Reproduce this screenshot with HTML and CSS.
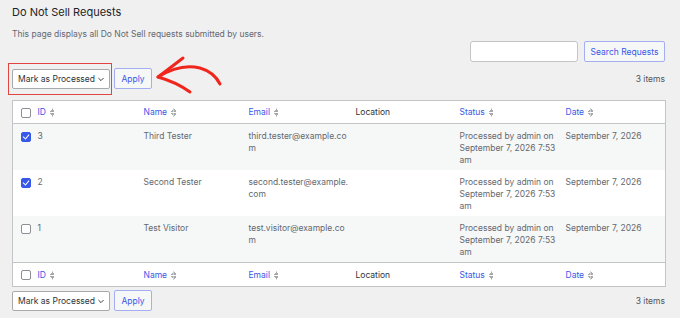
FILE: index.html
```html
<!DOCTYPE html>
<html lang="en">
<head>
    <meta charset="UTF-8">
    <title>Do Not Sell Requests</title>
    <link rel="stylesheet" href="styles.css">
</head>
<body>

<h1 class="page-title">Do Not Sell Requests</h1>
<p class="page-desc">This page displays all Do Not Sell requests submitted by users.</p>

<form class="search-box">
    <input type="text" class="search-input">
    <button type="button" class="btn">Search Requests</button>
</form>

<div class="tablenav top">
    <div class="bulkactions">
        <span class="highlight">
            <span class="select">Mark as Processed <svg class="chev" width="7" height="5" viewBox="0 0 7 5"><path d="M0.5 0.8 L3.5 3.8 L6.5 0.8" fill="none" stroke="#2c3338" stroke-width="1.1"/></svg></span>
        </span>
        <button type="button" class="btn">Apply</button>
        <!-- annotation arrow -->
        <svg class="arrow" width="80" height="46" viewBox="0 0 80 46">
            <path d="M6,25 Q28,11 48,16 Q62,20 68,32" fill="none" stroke="#f0261c" stroke-width="3" stroke-linecap="round"/>
            <path d="M31,6 Q18,16 6,25 Q24,30 38,40" fill="none" stroke="#f0261c" stroke-width="3" stroke-linecap="round" stroke-linejoin="round"/>
        </svg>
    </div>
    <span class="count">3 items</span>
</div>

<table class="list-table">
    <colgroup>
        <col style="width:19px"><col style="width:106px"><col style="width:105px"><col style="width:107px">
        <col style="width:104px"><col style="width:106px"><col style="width:106px">
    </colgroup>
    <thead>
        <tr>
            <th class="cb"><span class="check"></span></th>
            <th><a>ID</a><i class="sort"></i></th>
            <th><a>Name</a><i class="sort"></i></th>
            <th><a>Email</a><i class="sort"></i></th>
            <th>Location</th>
            <th><a>Status</a><i class="sort"></i></th>
            <th><a>Date</a><i class="sort"></i></th>
        </tr>
    </thead>
    <tbody>
        <tr class="alt">
            <td class="cb"><span class="check on"></span></td>
            <td>3</td>
            <td>Third Tester</td>
            <td class="email">third.tester@example.com</td>
            <td></td>
            <td class="status">Processed by admin on September 7, 2026 7:53 am</td>
            <td>September 7, 2026</td>
        </tr>
        <tr>
            <td class="cb"><span class="check on"></span></td>
            <td>2</td>
            <td>Second Tester</td>
            <td class="email">second.tester@example.com</td>
            <td></td>
            <td class="status">Processed by admin on September 7, 2026 7:53 am</td>
            <td>September 7, 2026</td>
        </tr>
        <tr class="alt">
            <td class="cb"><span class="check"></span></td>
            <td>1</td>
            <td>Test Visitor</td>
            <td class="email">test.visitor@example.com</td>
            <td></td>
            <td class="status">Processed by admin on September 7, 2026 7:53 am</td>
            <td>September 7, 2026</td>
        </tr>
    </tbody>
    <tfoot>
        <tr>
            <th class="cb"><span class="check"></span></th>
            <th><a>ID</a><i class="sort"></i></th>
            <th><a>Name</a><i class="sort"></i></th>
            <th><a>Email</a><i class="sort"></i></th>
            <th>Location</th>
            <th><a>Status</a><i class="sort"></i></th>
            <th><a>Date</a><i class="sort"></i></th>
        </tr>
    </tfoot>
</table>

<div class="tablenav bottom">
    <div class="bulkactions">
        <span class="select">Mark as Processed <svg class="chev" width="7" height="5" viewBox="0 0 7 5"><path d="M0.5 0.8 L3.5 3.8 L6.5 0.8" fill="none" stroke="#2c3338" stroke-width="1.1"/></svg></span>
        <button type="button" class="btn">Apply</button>
    </div>
    <span class="count">3 items</span>
</div>

</body>
</html>
```

FILE: styles.css
```css
body {
    margin: 0;
    padding: 4px 15px 0 12px;
    background-color: #f0f0f1;
    font-family: "Inter", "Liberation Sans", sans-serif;
    font-size: 8.5px;
    color: #50575e;
}
.page-title {
    margin: 0;
    font-size: 11px;
    font-weight: 400;
    line-height: 16px;
    color: #1d2327;
}
.page-desc {
    margin: 8px 0 0;
    line-height: 12px;
    color: #646970;
}
.search-box {
    display: flex;
    justify-content: flex-end;
    gap: 6px;
    margin: 1px 0 0;
}
.search-input {
    width: 108px;
    height: 21px;
    box-sizing: border-box;
    border: 1px solid #c3c4c7;
    border-radius: 3px;
    background: #fff;
    margin: 0;
}
.btn {
    height: 21px;
    box-sizing: border-box;
    padding: 0;
    margin: 0;
    border: 1px solid #a6aef2;
    border-radius: 2px;
    background: #f6f7f7;
    color: #3858e9;
    font-family: inherit;
    font-size: 8.5px;
    white-space: nowrap;
}
.search-box .btn {
    width: 81px;
}
.bulkactions .btn {
    width: 38px;
}
.tablenav {
    display: flex;
    justify-content: space-between;
    align-items: center;
}
.tablenav.top {
    margin-top: 6px;
    height: 21px;
}
.tablenav.bottom {
    margin-top: 3px;
    height: 21px;
}
.bulkactions {
    position: relative;
    display: flex;
    align-items: center;
    gap: 4px;
}
.highlight {
    position: relative;
    display: flex;
}
.highlight::after {
    content: "";
    position: absolute;
    left: -4px;
    right: -2px;
    top: -6px;
    bottom: -6px;
    border: 1.5px solid #e0463f;
}
.select {
    display: inline-flex;
    align-items: center;
    gap: 3px;
    width: 98px;
    height: 20px;
    box-sizing: border-box;
    padding: 0 5px;
    border: 1px solid #a7aaad;
    border-radius: 2px;
    background: #fff;
    color: #2c3338;
    white-space: nowrap;
}
.chev {
    margin-top: 1px;
}
.arrow {
    position: absolute;
    left: 140px;
    top: -16px;
}
.count {
    color: #50575e;
}
.list-table {
    margin-top: 11px;
    width: 653px;
    table-layout: fixed;
    border-collapse: collapse;
    border: 1px solid #c3c4c7;
    background: #fff;
}
.list-table th,
.list-table td {
    padding: 6px 6px 5px;
    line-height: 12px;
    text-align: left;
    vertical-align: top;
    font-weight: 400;
}
.list-table thead th {
    padding-top: 5px;
    border-bottom: 1px solid #c3c4c7;
    color: #2c3338;
}
.list-table tfoot th {
    border-top: 1px solid #c3c4c7;
    color: #2c3338;
}
.list-table td {
    padding-bottom: 4px;
    color: #646970;
}
.list-table tr.alt td {
    background: #f6f7f7;
}
.list-table .cb {
    padding-left: 8px;
    padding-right: 0;
}
.list-table th.cb {
    padding-top: 7px;
}
.list-table td.cb {
    padding-top: 8px;
}
.list-table td.email,
.list-table td.status {
    padding-right: 0;
}
.email {
    word-break: break-all;
}
.list-table a {
    color: #3858e9;
}
.sort {
    display: inline-block;
    vertical-align: top;
    width: 5px;
    height: 9px;
    margin: 1.5px 0 0 4px;
    background:
        linear-gradient(to bottom right, transparent 50%, #a7aaad 50%) left top / 50% 4px no-repeat,
        linear-gradient(to bottom left, transparent 50%, #a7aaad 50%) right top / 50% 4px no-repeat,
        linear-gradient(to top right, transparent 50%, #a7aaad 50%) left bottom / 50% 4px no-repeat,
        linear-gradient(to top left, transparent 50%, #a7aaad 50%) right bottom / 50% 4px no-repeat;
}
.check {
    display: block;
    width: 10px;
    height: 10px;
    box-sizing: border-box;
    border: 1px solid #8c8f94;
    border-radius: 2px;
    background: #fff;
}
.check.on {
    background: #3858e9;
    border-color: #3858e9;
    position: relative;
}
.check.on::after {
    content: "";
    position: absolute;
    left: 2px;
    top: 0;
    width: 3px;
    height: 5px;
    border: solid #fff;
    border-width: 0 1.5px 1.5px 0;
    transform: rotate(40deg);
}
```
